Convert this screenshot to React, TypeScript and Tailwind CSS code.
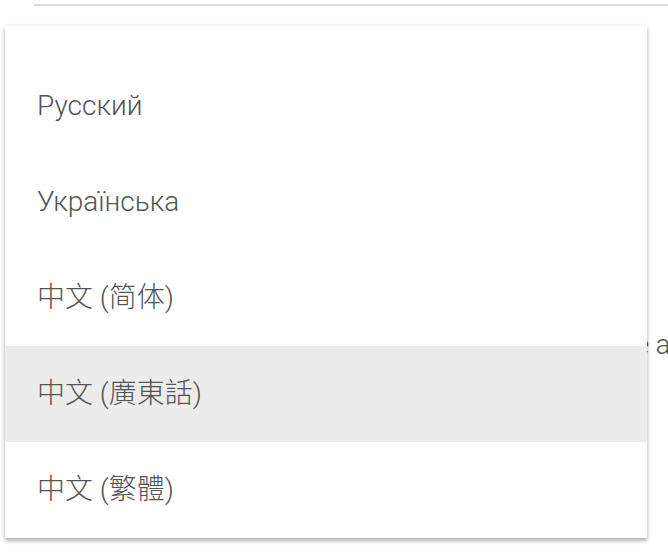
import React from 'react'

const LANGUAGES = [
  { id: 'ru', label: 'Русский' },
  { id: 'uk', label: 'Українська' },
  { id: 'zh-hans', label: '中文 (简体)' },
  { id: 'zh-yue', label: '中文 (廣東話)' },
  { id: 'zh-hant', label: '中文 (繁體)' },
]

const App: React.FC = () => {
  const active = 'zh-yue'

  return (
    <div className="relative h-[558px] w-[668px] overflow-hidden bg-white font-['Roboto','Noto_Sans_CJK_SC',sans-serif] font-light text-[#545454]">
      {/* page behind the menu */}
      <div className="ml-[34px] mt-[4px] h-[2px] bg-[#dedede]" />
      <div className="ml-[34px] mt-[116px] h-[96px] w-[613px] border-r border-[#e6e6e6]" />
      <div className="-mr-[16px] mt-[112px] flex justify-end whitespace-nowrap text-[27px] leading-[30px]">
        Select the language you would like to use as
      </div>

      {/* dropdown menu */}
      <div className="absolute left-[5px] top-[26px] w-[642px] bg-white pt-8 shadow-[0_3px_4px_rgba(0,0,0,0.28),0_0_6px_rgba(0,0,0,0.08)]">
        {LANGUAGES.map(l => (
          <div key={l.id}
            className={`flex h-[96px] items-center pl-[32px] text-[28px] ${active === l.id ? 'bg-[#ececec]' : ''}`}>
            {l.label}
          </div>
        ))}
      </div>
    </div>
  )
}

export default App
